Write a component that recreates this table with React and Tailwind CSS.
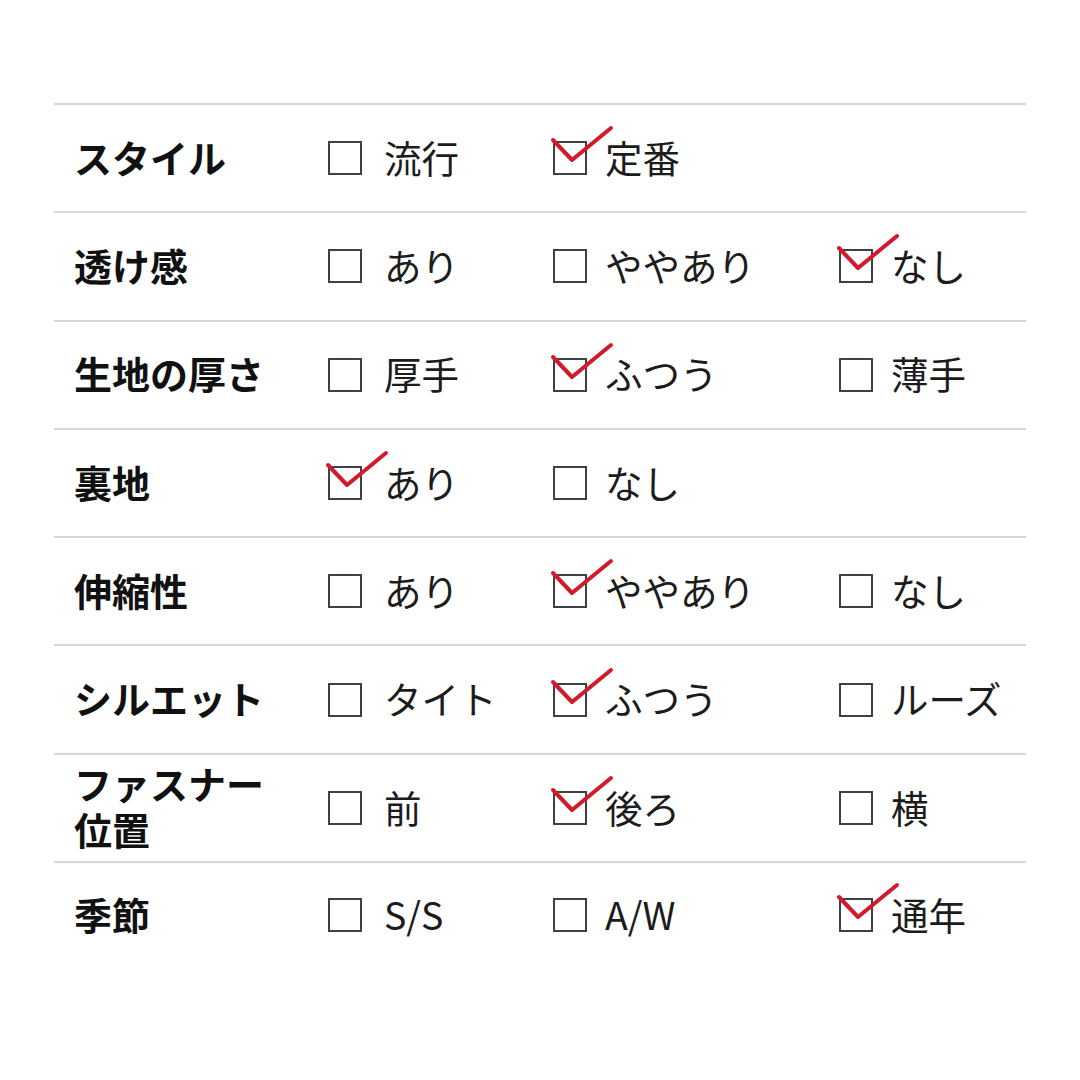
import React from 'react';

const ROWS = [
  { label: 'スタイル', options: ['流行', '定番'], checked: 1 },
  { label: '透け感', options: ['あり', 'ややあり', 'なし'], checked: 2 },
  { label: '生地の厚さ', options: ['厚手', 'ふつう', '薄手'], checked: 1 },
  { label: '裏地', options: ['あり', 'なし'], checked: 0 },
  { label: '伸縮性', options: ['あり', 'ややあり', 'なし'], checked: 1 },
  { label: 'シルエット', options: ['タイト', 'ふつう', 'ルーズ'], checked: 1 },
  { label: ['ファスナー', '位置'], options: ['前', '後ろ', '横'], checked: 1 },
  { label: '季節', options: ['S/S', 'A/W', '通年'], checked: 2 },
];

const COL_WIDTHS = ['w-[225px]', 'w-[286px]', 'flex-1'];

const Box = ({ checked }) => (
  <span className="relative inline-block w-[34px] h-[34px] shrink-0 border-[2.5px] border-[#3f3f44]">
    {checked && (
      <svg
        className="absolute left-[-3px] top-[-17px] overflow-visible"
        width="64"
        height="40"
        viewBox="0 0 64 40"
        fill="none"
      >
        <path
          d="M1 14 L20 34 L59 2"
          stroke="#d11a2a"
          strokeWidth="4"
          strokeLinecap="round"
          strokeLinejoin="round"
        />
      </svg>
    )}
  </span>
);

const Option = ({ text, checked, first }) => (
  <div className="flex items-center">
    <Box checked={checked} />
    <span className={`${first ? 'ml-[22px]' : 'ml-[18px]'} -mt-[3px] text-[37.5px] leading-none text-[#1c1c1c]`}>
      {text}
    </span>
  </div>
);

export default function App() {
  return (
    <div
      className="w-[1080px] h-[1080px] bg-white pt-[103px] px-[54px]"
      style={{ fontFamily: '"Noto Sans CJK JP", "Noto Sans", sans-serif' }}
    >
      {ROWS.map((row, i) => (
        <div
          key={i}
          className={`flex items-center h-[108.3px] border-t-2 border-[#d6d6de] ${i === ROWS.length - 1 ? 'pb-[2px]' : ''}`}
        >
          <div className="w-[274px] pl-[20px] -mt-[3px] text-[38px] font-bold leading-[46px] text-[#111]">
            {Array.isArray(row.label) ? (
              <>
                <div>{row.label[0]}</div>
                <div>{row.label[1]}</div>
              </>
            ) : (
              row.label
            )}
          </div>
          {row.options.map((opt, j) => (
            <div key={j} className={COL_WIDTHS[j]}>
              <Option text={opt} checked={row.checked === j} first={j === 0} />
            </div>
          ))}
        </div>
      ))}
    </div>
  );
}
